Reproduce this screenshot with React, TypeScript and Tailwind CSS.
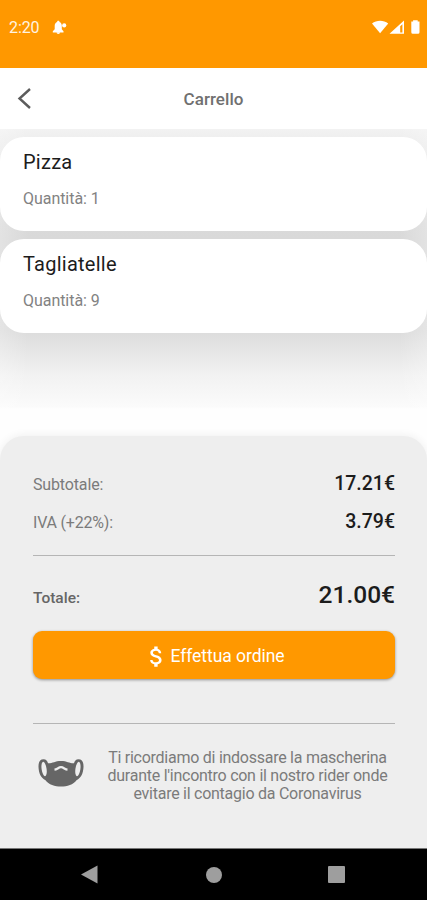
import { MdAttachMoney } from "react-icons/md";

interface CartItem {
	name: string;
	quantity: number;
}

const items: CartItem[] = [
	{ name: "Pizza", quantity: 1 },
	{ name: "Tagliatelle", quantity: 9 },
];

function StatusBar() {
	return (
		<div className="h-[68px] shrink-0 bg-[#ff9800] text-white flex items-start justify-between pt-[18px] pl-[9px] pr-[7px]">
			<div className="flex items-center h-5 gap-[13px]">
				<span className="text-[16px] leading-5 tracking-[-0.1px] text-[#fff4e2]">2:20</span>
				<svg width="16" height="16" viewBox="0 0 16 16" fill="currentColor">
					<path d="M6.300.8c.8 0 1.200.5 1.200 1.200 1.500.6 2.300 1.900 2.300 3.700v3.600l1.700 2v1.200H.8v-1.200L2.700 9.300V5.700C2.700 3.900 3.600 2.600 5.100 2c0-.7.400-1.200 1.200-1.200z" />
					<path d="M4.500 12.300h3.600a1.800 1.800 0 0 1-3.600 0z" />
					<circle cx="12.200" cy="5.400" r="2.100" />
				</svg>
			</div>
			<div className="flex items-center h-[18px]">
				<svg width="48" height="16" viewBox="0 0 48 16" fill="currentColor">
					<path d="M0 4.500C4.600.700 11.600.700 16.200 4.500L8.100 14.300z" />
					<path fillRule="evenodd" d="M17.500 14.800 32 1.500v13.300zM28.200 7.300v6.100h2.200V5.300z" />
					<path d="M39.300 2.500h1.800V1.300h4.600v1.200h1.800v10.800q0 1.500-1.500 1.500h-5.200q-1.500 0-1.500-1.500z" />
				</svg>
			</div>
		</div>
	);
}

function Header() {
	return (
		<header className="h-[61px] shrink-0 bg-white grid grid-cols-[1fr_auto_1fr] items-center text-[#707070]">
			<svg className="ml-[17px]" width="15" height="22" viewBox="0 0 15 22" fill="none" stroke="#5c5c5c" strokeWidth="2.400">
				<path d="M13 1 2.500 10.500 13 20" />
			</svg>
			<h1 className="text-[17px] font-medium pt-[2px] tracking-[0.05px]">Carrello</h1>
		</header>
	);
}

function ItemCard({ item }: { item: CartItem }) {
	return (
		<li className="h-[94px] bg-white rounded-[24px] px-[23px] pt-[13px]">
			<div className="text-[20px] leading-6 text-[#1c1c1c] tracking-[0.25px]">{item.name}</div>
			<div className="text-[16px] leading-5 mt-[15px] text-[#828282] tracking-[-0.05px]">
				Quantità: {item.quantity}
			</div>
		</li>
	);
}

function MaskIcon() {
	return (
		<svg width="46" height="28" viewBox="0 0 46 28" fill="#666">
			<path d="M5.500.3C8.200.3 9.500 2 10 4.300 15 4.300 17 2 23 2s8 2.300 13 2.300C36.500 2 37.800.3 40.500.3c3.700 0 5.200 3 5 7.700-.3 6.500-2.500 10.800-7 13.200C35.500 25.500 29 27.600 23 27.600S10.500 25.500 7.500 21.200C3 18.800.8 14.500.5 8 .3 3.300 1.800.3 5.500.3z" />
			<ellipse cx="6.100" cy="10" rx="2.500" ry="7.300" transform="rotate(-8 6.100 10)" fill="#eee" />
			<ellipse cx="39.900" cy="10" rx="2.500" ry="7.300" transform="rotate(8 39.900 10)" fill="#eee" />
			<path d="M16.500 10.700C19 10.500 20.500 8.200 23 8.200s4 2.300 6.500 2.500" fill="none" stroke="#eee" strokeWidth="2.300" />
		</svg>
	);
}

function Summary() {
	return (
		<section className="h-[412px] shrink-0 bg-[#eee] rounded-t-[24px] pl-[33px] pr-8 pt-[34px] text-[#7b7b7b] shadow-[0_-1px_8px_rgba(0,0,0,0.06)]">
			<div className="flex items-center justify-between h-[26px]">
				<span className="text-[16px] pt-[4px] tracking-[-0.15px]">Subtotale:</span>
				<span className="text-[19.5px] font-medium text-[#1c1c1c] pt-[1px]">17.21€</span>
			</div>
			<div className="flex items-center justify-between h-[26px] mt-3">
				<span className="text-[16px] pt-[4px] tracking-[-0.2px]">IVA (+22%):</span>
				<span className="text-[19.5px] font-medium text-[#1c1c1c] pt-[1px]">3.79€</span>
			</div>
			<div className="h-px bg-[#b5b5b5] mt-[21px]" />
			<div className="flex items-center justify-between h-[30px] mt-6">
				<span className="text-[15.5px] font-medium text-[#666] pt-[7px]">Totale:</span>
				<span className="text-[24.5px] font-medium text-[#1c1c1c]">21.00€</span>
			</div>
			<button className="w-full h-12 mt-[21px] rounded-[9px] bg-[#ff9800] text-white flex items-center justify-center pt-[2px] shadow-[0_1px_3px_rgba(0,0,0,0.4)]">
				<MdAttachMoney className="w-[27px] h-[27px]" />
				<span className="text-[17.5px] tracking-[-0.05px]">Effettua ordine</span>
			</button>
			<div className="h-px bg-[#b5b5b5] mt-11" />
			<div className="flex items-start mt-[25px]">
				<div className="ml-[5px] mt-[10px]">
					<MaskIcon />
				</div>
				<p className="ml-4 w-[295px] text-center text-[16px] leading-[18px] tracking-[-0.26px]">
					Ti ricordiamo di indossare la mascherina
					<br />
					durante l'incontro con il nostro rider onde
					<br />
					evitare il contagio da Coronavirus
				</p>
			</div>
		</section>
	);
}

function NavigationBar() {
	return (
		<nav className="h-[52px] shrink-0 bg-black border-t border-[#777] flex items-center justify-between pl-[81px] pr-[82px]">
			<svg width="17" height="20" viewBox="0 0 17 20" fill="#9e9e9e">
				<path d="M0 9.500 16.500.500v18z" />
			</svg>
			<div className="size-4 ml-px rounded-full bg-[#9e9e9e]" />
			<div className="size-[17px] rounded-[1px] bg-[#9e9e9e]" />
		</nav>
	);
}

export default function App() {
	return (
		<div className="w-[427px] h-[900px] flex flex-col overflow-hidden bg-[#fefefe] font-['Roboto','Liberation_Sans',sans-serif]">
			<StatusBar />
			<Header />
			{/* Soft shade behind the cards, lighter towards both edges */}
			<ul className="h-[307px] shrink-0 flex flex-col gap-2 pt-2 bg-[linear-gradient(90deg,rgba(255,255,255,0.25),transparent_28px,transparent_399px,rgba(255,255,255,0.25)),linear-gradient(180deg,#f2f2f2_0px,#efefef_8px,#dadada_95px,#d9d9d9_110px,#dcdcdc_203px,#e6e6e6_223px,#f2f2f2_247px,#fbfbfb_278px,#fefefe_280px)]">
				{items.map((item) => (
					<ItemCard key={item.name} item={item} />
				))}
			</ul>
			<Summary />
			<NavigationBar />
		</div>
	);
}
